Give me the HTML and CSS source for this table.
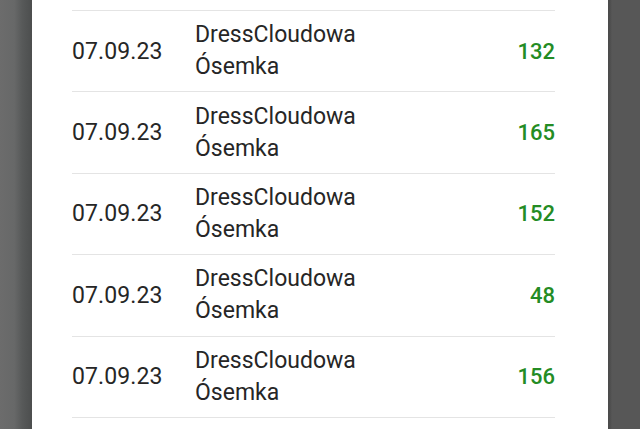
FILE: index.html
```
<!DOCTYPE html>
<html lang="pl">
<head>
<meta charset="utf-8">
<link rel="stylesheet" href="styles.css">
</head>
<body>
<div class="screen">
  <div class="side side-left"></div>
  <div class="card">
    <div class="list">
      <div class="row">
        <div class="date">07.09.23</div>
        <div class="name">DressCloudowa<br>Ósemka</div>
        <div class="qty">132</div>
      </div>
      <div class="row">
        <div class="date">07.09.23</div>
        <div class="name">DressCloudowa<br>Ósemka</div>
        <div class="qty">165</div>
      </div>
      <div class="row">
        <div class="date">07.09.23</div>
        <div class="name">DressCloudowa<br>Ósemka</div>
        <div class="qty">152</div>
      </div>
      <div class="row">
        <div class="date">07.09.23</div>
        <div class="name">DressCloudowa<br>Ósemka</div>
        <div class="qty">48</div>
      </div>
      <div class="row">
        <div class="date">07.09.23</div>
        <div class="name">DressCloudowa<br>Ósemka</div>
        <div class="qty">156</div>
      </div>
      <div class="end"></div>
    </div>
  </div>
  <div class="side side-right"></div>
</div>
</body>
</html>
```
FILE: styles.css
```
html, body {
  margin: 0;
  padding: 0;
  height: 100%;
  overflow: hidden;
}

body {
  font-family: Roboto, "Noto Sans", sans-serif;
}

.screen {
  display: flex;
  height: 429px;
  width: 640px;
}

.side {
  width: 32px;
  flex: none;
}

.side-left {
  background: linear-gradient(to right, #6c6c6c 0%, #676868 45%, #575959 70%, #4c4e4e 100%);
}

.side-right {
  background: linear-gradient(to right, #4a4a4a 0, #4d4d4d 2px, #575757 4px, #575757 100%);
}

.card {
  flex: 1;
  background: #ffffff;
  padding: 10px 53px 0 40px;
  overflow: hidden;
}

.row {
  display: flex;
  align-items: center;
  height: 80.4px;
  border-top: 1px solid #e4e4e4;
}

.end {
  border-top: 1px solid #e4e4e4;
}

.date {
  width: 122px;
  flex: none;
  font-size: 23px;
  color: #262626;
  letter-spacing: 0.1px;
}

.name {
  flex: 1;
  padding-left: 1px;
  font-size: 23px;
  line-height: 32px;
  color: #262626;
}

.qty {
  font-size: 22px;
  font-weight: 500;
  color: #248c24;
  text-align: right;
}
```
